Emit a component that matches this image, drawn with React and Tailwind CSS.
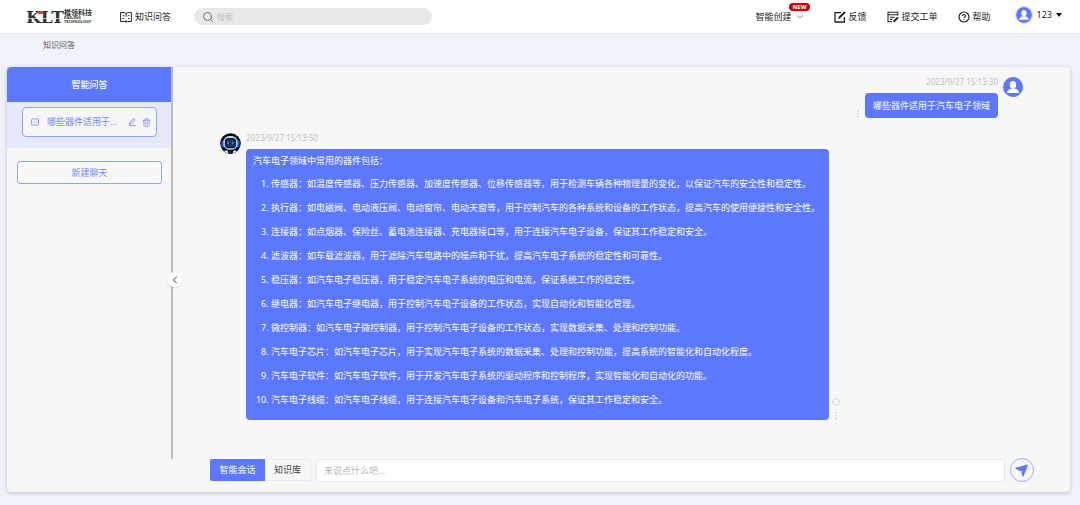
import {
  ChevronDown,
  ChevronLeft,
  CircleHelp,
  Search,
  Trash2,
} from 'lucide-react';

const answers = [
  '传感器：如温度传感器、压力传感器、加速度传感器、位移传感器等，用于检测车辆各种物理量的变化，以保证汽车的安全性和稳定性。',
  '执行器：如电磁阀、电动液压阀、电动窗帘、电动天窗等，用于控制汽车的各种系统和设备的工作状态，提高汽车的使用便捷性和安全性。',
  '连接器：如点烟器、保险丝、蓄电池连接器、充电器接口等，用于连接汽车电子设备，保证其工作稳定和安全。',
  '滤波器：如车载滤波器，用于滤除汽车电路中的噪声和干扰，提高汽车电子系统的稳定性和可靠性。',
  '稳压器：如汽车电子稳压器，用于稳定汽车电子系统的电压和电流，保证系统工作的稳定性。',
  '继电器：如汽车电子继电器，用于控制汽车电子设备的工作状态，实现自动化和智能化管理。',
  '微控制器：如汽车电子微控制器，用于控制汽车电子设备的工作状态，实现数据采集、处理和控制功能。',
  '汽车电子芯片：如汽车电子芯片，用于实现汽车电子系统的数据采集、处理和控制功能，提高系统的智能化和自动化程度。',
  '汽车电子软件：如汽车电子软件，用于开发汽车电子系统的驱动程序和控制程序，实现智能化和自动化的功能。',
  '汽车电子线缆：如汽车电子线缆，用于连接汽车电子设备和汽车电子系统，保证其工作稳定和安全。',
];

const BookIcon = () => (
  <svg viewBox="0 0 12 12" className="w-3 h-3" fill="none" stroke="currentColor" strokeWidth="1">
    <path d="M6 2.6C5 1.6 3.8 1.4 .6 1.5V10.5H4.4L6 11.2L7.6 10.5H11.4V1.5C8.2 1.4 7 1.6 6 2.6ZM6 2.6V5.6M6 9V11" />
    <path d="M2.6 4.2L4.4 5.2M9.4 4.2L7.6 5.2M2.6 7.6H4.2M9.4 7.6H7.8" />
  </svg>
);

const FeedbackIcon = () => (
  <svg viewBox="0 0 12 12" className="w-3 h-3" fill="none" stroke="currentColor" strokeWidth="1.3">
    <path d="M7 1.7H1V11H10.4V6" />
    <path d="M4.6 7.4L11 1" strokeWidth="2" />
  </svg>
);

const TicketIcon = () => (
  <svg viewBox="0 0 12 12" className="w-3 h-3" fill="none" stroke="currentColor" strokeWidth="1.1">
    <path d="M10.8 4.6V1.2H1V10.8H5.2" />
    <path d="M1 3.8H10.8M3 6.2H7.6M3 8.4H5.4" />
    <path d="M6.6 10.9L10.9 6.4" strokeWidth="2" />
  </svg>
);

const UserAvatar = ({ className }) => (
  <svg viewBox="0 0 20 20" className={className}>
    <circle cx="10" cy="10" r="10" fill="#5b78ff" />
    <ellipse cx="10" cy="7.8" rx="3.2" ry="3.9" fill="#fff" />
    <path d="M3.9 16C4 13.2 6 12.4 8.2 11.6H11.8C14 12.4 16 13.2 16.1 16Z" fill="#fff" />
  </svg>
);

const BotAvatar = () => (
  <svg viewBox="0 0 21 21" className="w-[21px] h-[21px] shrink-0">
    <circle cx="10.5" cy="10.5" r="10.3" fill="#05070f" />
    <rect x="1.4" y="7" width="3.4" height="7.6" rx="1.7" fill="#2458d0" />
    <rect x="16.2" y="7" width="3.4" height="7.6" rx="1.7" fill="#2458d0" />
    <rect x="3.4" y="3" width="14.2" height="13.8" rx="5.8" fill="#b8d6f5" />
    <rect x="4.9" y="5" width="11.2" height="10.2" rx="3.6" fill="#0b1c3a" />
    <rect x="6.4" y="6.6" width="8.2" height="7.2" rx="2" fill="#15385c" />
    <rect x="7.4" y="8.6" width="1.6" height="2.8" rx=".8" fill="#3d8fb5" />
    <rect x="12" y="8.6" width="1.6" height="2.8" rx=".8" fill="#3d8fb5" />
    <path d="M4 18L7.4 17.2L8.4 20.2L6.2 19.6ZM17 18L13.6 17.2L12.6 20.2L14.8 19.6Z" fill="#e6f0fb" />
    <path d="M8.6 18.2H12.4V21H8.6Z" fill="#16294a" />
  </svg>
);

const MoreDots = () => (
  <svg viewBox="0 0 4 8" className="w-1 h-2" fill="#d6d6d6">
    <rect x="1" y="0" width="2" height="1.5" />
    <rect x="1" y="3" width="2" height="1.5" />
    <rect x="1" y="6" width="2" height="1.5" />
  </svg>
);

const Logo = () => (
  <a href="#" aria-label="KLT" className="flex items-center w-[94px] text-[#333]">
    <span className="relative font-['DejaVu_Serif',serif] font-bold text-[17px] leading-4">
      KLT
      <span className="absolute left-[12px] top-[2px] w-[5px] h-[3px] bg-[#e0413c]" />
      <span className="absolute inset-x-0 top-[9px] h-px bg-white/60" />
    </span>
    <span className="flex flex-col font-bold">
      <span className="text-[7px] leading-[7px]">楷领科技</span>
      <span className="text-[4px] leading-1">KAILING</span>
      <span className="text-[4px] leading-1">TECHNOLOGY</span>
    </span>
  </a>
);

const Header = () => (
  <header className="flex items-center h-[33px] pl-[26px] pr-[18px] bg-white text-[9px] text-[#222]">
    <Logo />
    <a href="#" className="flex items-center gap-[3px]">
      <BookIcon />
      知识问答
    </a>
    <label className="flex items-center gap-[3px] w-[238px] h-[17px] ml-[23px] px-2 rounded-full bg-[#e8e8e8]">
      <Search size={12} strokeWidth={2} className="text-[#6b7280]" />
      <input
        type="text"
        aria-label="搜索"
        placeholder="搜索"
        className="flex-1 min-w-0 text-[8px] outline-none placeholder:text-[#b9bdc6]"
      />
    </label>
    <nav className="flex items-center ml-auto">
      <button type="button" className="relative flex items-center gap-[3px]">
        智能创建
        <ChevronDown size={10} strokeWidth={2} className="text-gray-500" />
        <span className="absolute -top-[7px] left-[34px] px-[3px] rounded-full bg-[#c8000a] text-[6px] leading-2 font-bold text-white">
          NEW
        </span>
      </button>
      <a href="#" className="flex items-center gap-[3px] ml-[29px]">
        <FeedbackIcon />
        反馈
      </a>
      <a href="#" className="flex items-center gap-[3px] ml-5">
        <TicketIcon />
        提交工单
      </a>
      <a href="#" className="flex items-center gap-[3px] ml-5">
        <CircleHelp size={12} strokeWidth={2.4} />
        帮助
      </a>
      <button type="button" className="flex items-center gap-1 ml-6 pb-[3px]">
        <UserAvatar className="w-[18px] h-[18px] rounded-full border border-[#d5dcf5]" />
        123
        <svg viewBox="0 0 6 4" className="w-[6px] h-1">
          <path d="M0 0H6L3 4Z" fill="#111" />
        </svg>
      </button>
    </nav>
  </header>
);

const Sidebar = () => (
  <aside className="relative w-[167px] pr-[2px] shrink-0">
    <h2 className="h-[35px] rounded-tl bg-[#5b78ff] text-center text-[9px] leading-[35px] font-medium text-white">
      智能问答
    </h2>
    <div className="h-[46px] pt-[5px] px-[15px] bg-[#e6e9f9]">
      <div className="flex items-center h-[30px] px-2 rounded border border-[#8ea3fb] bg-[#f6f6f8] text-[9px] text-[#6f88fb]">
        <svg viewBox="0 0 8 8" className="w-2 h-2" fill="none" stroke="currentColor" strokeWidth=".8">
          <rect x=".5" y=".9" width="7" height="6.2" rx="1" />
          <path d="M2 4H2.8M3.7 4H4.3M5.2 4H6" />
        </svg>
        <span className="flex-1 ml-2 truncate">哪些器件适用于...</span>
        <button type="button" aria-label="编辑">
          <svg viewBox="0 0 8 8" className="w-2 h-2" fill="none" stroke="currentColor" strokeWidth=".9">
            <path d="M1.4 6L1.8 4.4L5.6 .7L6.9 2L3.1 5.7ZM.6 7.4H7.6" />
          </svg>
        </button>
        <button type="button" aria-label="删除" className="ml-[6px] -mr-[3px]">
          <Trash2 size={9} strokeWidth={2} />
        </button>
      </div>
    </div>
    <div className="pt-[10px] px-[10px]">
      <button
        type="button"
        className="w-full h-[23px] rounded-[3px] border border-[#8ea3fb] text-[9px] text-[#6f88fb]"
      >
        新建聊天
      </button>
    </div>
    {/* Splitter */}
    <div className="absolute right-px top-0 bottom-[33px] w-[2px] bg-[#bcbcbe]" />
    <button
      type="button"
      aria-label="收起"
      className="absolute -right-2 top-[205px] flex items-center justify-center w-[15px] h-[15px] rounded-full bg-white shadow-sm text-[#333]"
    >
      <ChevronLeft size={12} strokeWidth={2} />
    </button>
  </aside>
);

const Composer = () => (
  <form className="flex items-center px-9 pb-[10px] text-[9px]">
    <button type="button" className="w-[55px] h-[22px] rounded-l-xs bg-[#5b78ff] text-white">
      智能会话
    </button>
    <button
      type="button"
      className="w-[46px] h-[22px] rounded-r-xs border border-l-0 border-[#ebebeb] text-[#444]"
    >
      知识库
    </button>
    <input
      type="text"
      aria-label="消息"
      placeholder="来说点什么吧..."
      className="flex-1 min-w-0 h-[23px] mx-[5px] px-[7px] rounded-xs border border-[#e8e8ea] bg-white outline-none placeholder:text-[#b8b8b8]"
    />
    <button
      type="submit"
      aria-label="发送"
      className="flex items-center justify-center w-6 h-6 rounded-full border border-[#9dafff]"
    >
      <svg viewBox="0 0 14 14" className="w-[14px] h-[14px]">
        <path d="M13.2 1.2L.4 4.8V5.8L5 8L5.2 8.6L7.4 7L6.4 9.4L7.6 13.4H8.6Z" fill="#5b78ff" />
      </svg>
    </button>
  </form>
);

const App = () => {
  return (
    <div className="flex flex-col min-h-screen bg-[#eff2f8] font-['Noto_Sans','Noto_Sans_CJK_SC',sans-serif]">
      <Header />
      <div className="h-[34px] pl-[43px] pt-[5px] border-t border-[#e8eaee] text-[8px] leading-3 text-[#555]">
        知识问答
      </div>

      <main className="flex flex-1 ml-[7px] mr-[10px] mb-[13px] rounded bg-[#f7f7f7] shadow-[0_1px_4px_rgba(0,0,0,0.2)]">
        <Sidebar />
        <section className="flex flex-col flex-1 min-w-0">
          <div className="flex-1 pt-[10px] pl-[46px] pr-[47px] text-[9px]">
            {/* Question */}
            <div className="flex justify-end items-start gap-[5px]">
              <div className="flex flex-col items-end">
                <time className="text-[8px] leading-[10px] text-[#bcbfc6]">2023/9/27 15:13:30</time>
                <div className="flex items-end gap-[5px] mt-[6px]">
                  <button type="button" aria-label="更多">
                    <MoreDots />
                  </button>
                  <p className="px-2 rounded bg-[#5b78ff] leading-[25px] text-white">哪些器件适用于汽车电子领域</p>
                </div>
              </div>
              <UserAvatar className="w-5 h-5" />
            </div>

            {/* Answer */}
            <div className="flex items-start gap-[5px] mt-[15px]">
              <BotAvatar />
              <div className="flex flex-col items-start">
                <time className="text-[8px] leading-[10px] text-[#bcbfc6]">2023/9/27 15:13:50</time>
                <div className="flex items-end gap-[3px] mt-[6px]">
                  <div className="pt-[5px] pb-2 pl-[7px] pr-[9px] rounded bg-[#5b78ff] text-white">
                    <p className="leading-[14px]">汽车电子领域中常用的器件包括：</p>
                    <ol className="pl-[18px] pt-1 list-decimal leading-6">
                      {answers.map((answer) => (
                        <li key={answer}>{answer}</li>
                      ))}
                    </ol>
                  </div>
                  <div className="flex flex-col items-center gap-[6px]">
                    <button type="button" aria-label="重新生成">
                      <svg viewBox="0 0 8 8" className="w-2 h-2" fill="none" stroke="#d3d3d3">
                        <path d="M7.4 3A3.4 3.4 0 1 0 7.3 5M7.6 1.6V3.4H5.8" />
                      </svg>
                    </button>
                    <button type="button" aria-label="更多">
                      <MoreDots />
                    </button>
                  </div>
                </div>
              </div>
            </div>
          </div>
          <Composer />
        </section>
      </main>
    </div>
  );
};

export default App;
